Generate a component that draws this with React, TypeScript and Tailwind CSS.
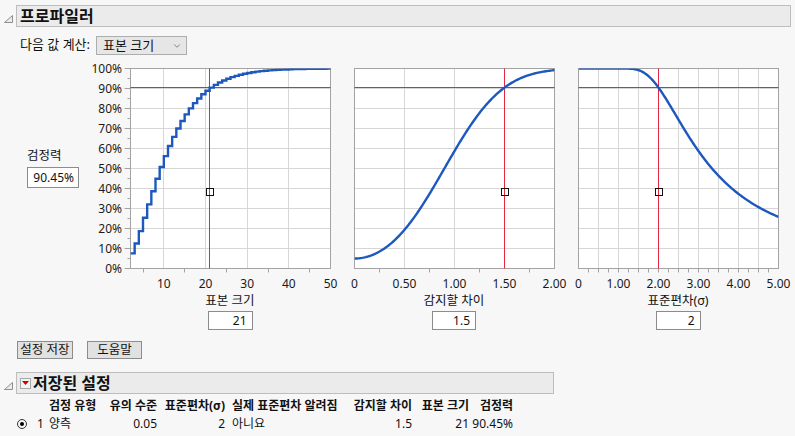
import { ChevronDown } from "lucide-react";

// 검정력 계산 (단일 표본 양측 t 검정, 비중심 t 분포 수치 적분)
function lgamma(x: number): number {
  const c = [
    0.99999999999980993, 676.5203681218851, -1259.1392167224028, 771.32342877765313,
    -176.61502916214059, 12.507343278686905, -0.13857109526572012, 9.9843695780195716e-6,
    1.5056327351493116e-7,
  ];
  if (x < 0.5) return Math.log(Math.PI / Math.sin(Math.PI * x)) - lgamma(1 - x);
  x -= 1;
  let a = c[0];
  const t = x + 7.5;
  for (let i = 1; i < 9; i++) a += c[i] / (x + i);
  return 0.5 * Math.log(2 * Math.PI) + (x + 0.5) * Math.log(t) - t + Math.log(a);
}

function erf(x: number) {
  const s = x < 0 ? -1 : 1;
  const ax = Math.abs(x);
  const t = 1 / (1 + 0.3275911 * ax);
  const y =
    1 -
    ((((1.061405429 * t - 1.453152027) * t + 1.421413741) * t - 0.284496736) * t + 0.254829592) *
      t *
      Math.exp(-ax * ax);
  return s * y;
}
const Phi = (x: number) => 0.5 * (1 + erf(x / Math.SQRT2));

// P(T' > t), T' ~ 비중심 t(nu, lam)
function upperT(t: number, lam: number, nu: number) {
  const N = 1000;
  const U = Math.sqrt(nu) + 9;
  const h = U / N;
  const lc = (nu / 2 - 1) * Math.LN2 + lgamma(nu / 2);
  const sq = Math.sqrt(nu);
  let s = 0;
  for (let i = 0; i <= N; i++) {
    const u = i * h;
    const f = u === 0 ? (nu === 1 ? Math.exp(-lc) : 0) : Math.exp((nu - 1) * Math.log(u) - (u * u) / 2 - lc);
    const w = i === 0 || i === N ? 1 : i % 2 ? 4 : 2;
    s += w * f * Phi(lam - (t * u) / sq);
  }
  return (s * h) / 3;
}

const tcCache: Record<number, number> = {};
function tcrit(nu: number) {
  if (tcCache[nu]) return tcCache[nu];
  let lo = 0;
  let hi = 60;
  for (let i = 0; i < 45; i++) {
    const mid = (lo + hi) / 2;
    if (upperT(mid, 0, nu) > 0.025) lo = mid;
    else hi = mid;
  }
  tcCache[nu] = (lo + hi) / 2;
  return tcCache[nu];
}

function power(n: number, d: number) {
  const nu = n - 1;
  const lam = d * Math.sqrt(n);
  const tc = tcrit(nu);
  return Math.min(1, upperT(tc, lam, nu) + 1 - upperT(-tc, lam, nu));
}

const P0 = power(21, 1.5 / 2);

const FRAME_TOP = 8.5;
const Y = (q: number) => FRAME_TOP + 200 - 200 * q;
const crisp = (v: number) => Math.floor(v) + 0.5;

type ChartProps = {
  id: string;
  svgW: number;
  fx: number;
  xMin: number;
  xMax: number;
  grid: number[];
  ticks: number[];
  labels: [number, string][];
  curve: (X: (v: number) => number) => string;
  redV: number;
  yAxis?: boolean;
  title: string;
  value: string;
  boxW: string;
};

function Chart({ id, svgW, fx, xMin, xMax, grid, ticks, labels, curve, redV, yAxis, title, value, boxW }: ChartProps) {
  const X = (v: number) => fx + ((v - xMin) / (xMax - xMin)) * 200;
  const rx = crisp(X(redV));
  const ry = crisp(Y(P0));
  return (
    <div className="flex flex-col" style={{ width: svgW }}>
      <svg width={svgW} height={232} className="overflow-visible">
        <defs>
          <clipPath id={id}>
            <rect x={fx} y={FRAME_TOP} width={200} height={200} />
          </clipPath>
        </defs>
        <rect x={fx} y={FRAME_TOP} width={200} height={200} fill="#ffffff" />
        {Array.from({ length: 9 }, (_, k) => (
          <line key={k} x1={fx} x2={fx + 200} y1={FRAME_TOP + 20 * (k + 1)} y2={FRAME_TOP + 20 * (k + 1)} stroke="#d6d6d6" />
        ))}
        {grid.map((g) => (
          <line key={g} x1={crisp(X(g))} x2={crisp(X(g))} y1={FRAME_TOP} y2={FRAME_TOP + 200} stroke="#d6d6d6" />
        ))}
        <rect x={fx} y={FRAME_TOP} width={200} height={200} fill="none" stroke="#a3a3a3" />
        {ticks.map((t) => (
          <line key={t} x1={crisp(X(t))} x2={crisp(X(t))} y1={FRAME_TOP + 200} y2={FRAME_TOP + 204} stroke="#a3a3a3" />
        ))}
        {yAxis &&
          Array.from({ length: 21 }, (_, k) => (
            <line
              key={k}
              x1={fx - (k % 2 ? 3 : 6)}
              x2={fx}
              y1={FRAME_TOP + 10 * k}
              y2={FRAME_TOP + 10 * k}
              stroke="#a3a3a3"
            />
          ))}
        {yAxis &&
          Array.from({ length: 11 }, (_, k) => (
            <text key={k} x={fx - 8.5} y={FRAME_TOP + 20 * k + 4.3} textAnchor="end" fontSize={12} fill="#1a1a1a">
              {100 - 10 * k}%
            </text>
          ))}
        <line x1={fx} x2={fx + 200} y1={ry} y2={ry} stroke="#e5283f" />
        <line x1={rx} x2={rx} y1={FRAME_TOP} y2={FRAME_TOP + 200} stroke="#e5283f" />
        <path d={curve(X)} fill="none" stroke="#1c58bd" strokeWidth={2.4} clipPath={`url(#${id})`} />
        <rect x={Math.round(X(redV)) - 3.5} y={128.5} width={7} height={7} fill="none" stroke="#111" />
        {labels.map(([v, s]) => (
          <text key={s} x={X(v)} y={227.6} textAnchor="middle" fontSize={12} fill="#1a1a1a">
            {s}
          </text>
        ))}
      </svg>
      <div className="flex w-[200px] flex-col items-center" style={{ marginLeft: fx - 0.5 }}>
        <div className="h-[18px] text-[12.5px] leading-[18px]">{title}</div>
        <div className={`mt-[1px] h-[19px] ${boxW} border border-[#8c8c8c] bg-white pr-[5px] text-right leading-[17px]`}>
          {value}
        </div>
      </div>
    </div>
  );
}

function Corner() {
  return (
    <svg width="9" height="8" className="mt-[5px]">
      <polygon points="0.5,7.5 8.5,0.5 8.5,7.5" fill="#ececec" stroke="#8f8f8f" />
    </svg>
  );
}

function SectionHeader({ title, width, menu }: { title: string; width: string; menu?: boolean }) {
  return (
    <div className={`flex h-[22px] items-center ${width}`}>
      <div className="flex h-full w-[16px] items-center justify-center">
        <Corner />
      </div>
      <div className="flex h-full flex-1 items-center border border-[#bdbdbd] bg-[#ebebeb] pl-[3px]">
        {menu && (
          <div className="mr-[2px] flex h-[11px] w-[11px] items-center justify-center border border-[#a8a8a8] bg-[#f2f2f2]">
            <svg width="7" height="4">
              <polygon points="0,0 7,0 3.5,4" fill="#d00000" />
            </svg>
          </div>
        )}
        <span className="text-[16px] font-bold leading-none">{title}</span>
      </div>
    </div>
  );
}

const cols = ["w-[51px] text-left", "w-[57px] text-right", "w-[68px] text-right", "w-[115px] pl-[7px] text-left", "w-[72px] text-right", "w-[57px] text-right", "w-[44px] text-right"];
const heads = ["검정 유형", "유의 수준", "표준편차(σ)", "실제 표준편차 알려짐", "감지할 차이", "표본 크기", "검정력"];
const row = ["양측", "0.05", "2", "아니요", "1.5", "21", "90.45%"];

export default function App() {
  const nVals = Array.from({ length: 49 }, (_, i) => i + 2);
  const stepP = nVals.map((n) => power(n, 0.75));
  const sizeCurve = (X: (v: number) => number) => {
    let d = `M${X(2)},${Y(stepP[0])}`;
    for (let i = 1; i < nVals.length; i++) d += ` H${X(nVals[i])} V${Y(stepP[i])}`;
    return d + ` H${X(50) + 2}`;
  };
  const deltaCurve = (X: (v: number) => number) =>
    Array.from({ length: 161 }, (_, i) => {
      const v = (i / 160) * 2;
      return `${i ? "L" : "M"}${X(v).toFixed(2)},${Y(power(21, v / 2)).toFixed(2)}`;
    }).join(" ");
  const sigmaCurve = (X: (v: number) => number) =>
    Array.from({ length: 161 }, (_, i) => {
      const v = 0.01 + (i / 160) * 4.99;
      return `${i ? "L" : "M"}${X(v).toFixed(2)},${Y(power(21, 1.5 / v)).toFixed(2)}`;
    }).join(" ");

  return (
    <div className="h-[436px] w-[795px] overflow-hidden bg-[#f7f7f7] text-[12px] text-[#111] [font-family:'Noto_Sans','Noto_Sans_CJK_KR',sans-serif]">
      <div className="flex flex-col pt-[5px]">
        <SectionHeader title="프로파일러" width="w-[791px]" />

        {/* 다음 값 계산 */}
        <div className="mt-[9px] flex items-start pl-[20px]">
          <span className="mt-[-1px] text-[13px] leading-[18px]">다음 값 계산:</span>
          <div className="ml-[6px] flex h-[19px] w-[91px] items-center justify-between border border-[#adadad] bg-[#e6e6e6] pl-[6px] pr-[4px] text-[13px] leading-none">
            <span>표본 크기</span>
            <ChevronDown size={10} strokeWidth={1.6} className="text-[#555]" />
          </div>
        </div>

        {/* 프로파일 그래프 */}
        <div className="mt-[5px] flex items-start">
          <div className="w-[86px] pl-[27px] pt-[88px]">
            <div className="h-[16px] text-[12.5px] leading-[16px]">검정력</div>
            <div className="mt-[3px] h-[21px] w-[52px] border border-[#8c8c8c] bg-white pr-[4px] text-right leading-[19px]">
              90.45%
            </div>
          </div>
          <Chart
            id="c1"
            svgW={258}
            fx={44.5}
            xMin={2}
            xMax={50}
            grid={[10, 20, 30, 40]}
            ticks={[5, 15, 25, 35, 45]}
            labels={[
              [10, "10"],
              [20, "20"],
              [30, "30"],
              [40, "40"],
              [50, "50"],
            ]}
            curve={sizeCurve}
            redV={21}
            yAxis
            title="표본 크기"
            value="21"
            boxW="w-[45px]"
          />
          <Chart
            id="c2"
            svgW={224}
            fx={10.5}
            xMin={0}
            xMax={2}
            grid={[0.5, 1, 1.5]}
            ticks={[0.25, 0.75, 1.25, 1.75]}
            labels={[
              [0, "0"],
              [0.5, "0.50"],
              [1, "1.00"],
              [1.5, "1.50"],
              [2, "2.00"],
            ]}
            curve={deltaCurve}
            redV={1.5}
            title="감지할 차이"
            value="1.5"
            boxW="w-[44px]"
          />
          <Chart
            id="c3"
            svgW={227}
            fx={10.5}
            xMin={0}
            xMax={5}
            grid={[0.5, 1, 1.5, 2, 2.5, 3, 3.5, 4, 4.5]}
            ticks={Array.from({ length: 19 }, (_, i) => (i + 1) * 0.25)}
            labels={[
              [0, "0"],
              [1, "1.00"],
              [2, "2.00"],
              [3, "3.00"],
              [4, "4.00"],
              [5, "5.00"],
            ]}
            curve={sigmaCurve}
            redV={2}
            title="표준편차(σ)"
            value="2"
            boxW="w-[45px]"
          />
        </div>

        {/* 버튼 */}
        <div className="mt-[11px] flex pl-[17px]">
          <button className="h-[18px] w-[56px] border border-[#8c8c8c] bg-[#e1e1e1] text-[12.5px] leading-none">설정 저장</button>
          <button className="ml-[14px] h-[18px] w-[55px] border border-[#8c8c8c] bg-[#e1e1e1] text-[12.5px] leading-none">도움말</button>
        </div>

        <div className="mt-[13px]">
          <SectionHeader title="저장된 설정" width="w-[554px]" menu />
        </div>

        {/* 저장된 설정 표 */}
        <div className="mt-[3px] flex h-[17px] items-center font-bold leading-[17px]">
          <div className="w-[49px]" />
          {heads.map((h, i) => (
            <div key={h} className={`${cols[i]} whitespace-nowrap`}>
              {h}
            </div>
          ))}
        </div>
        <div className="mt-[1px] flex h-[17px] items-center leading-[17px]">
          <div className="flex w-[49px] items-center pl-[17px]">
            <div className="flex h-[10px] w-[10px] items-center justify-center rounded-full border border-[#333]">
              <div className="h-[4px] w-[4px] rounded-full bg-black" />
            </div>
            <span className="ml-[10px]">1</span>
          </div>
          {row.map((v, i) => (
            <div key={i} className={`${cols[i]} whitespace-nowrap`}>
              {v}
            </div>
          ))}
        </div>
      </div>
    </div>
  );
}
